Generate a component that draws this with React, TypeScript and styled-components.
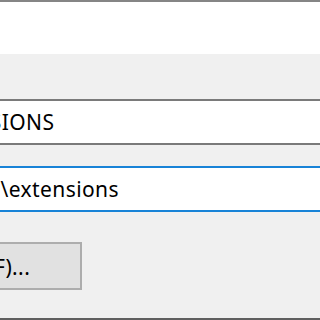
import styled, { createGlobalStyle } from "styled-components";

const GlobalStyle = createGlobalStyle`
    html, body {
        margin: 0;
        padding: 0;
        width: 320px;
        height: 320px;
        overflow: hidden;
        background: #f0f0f0;
    }
`;

const App = () => {
    return (
        <>
            <GlobalStyle />
            <Window>
                <TopRule />
                <TitleArea />
                <Body>
                    <Field>VSCODE_EXTENSIONS</Field>
                    <Field $focused>D:\Tools\VSCode\extensions</Field>
                    <ButtonRow>
                        <Button>浏览文件(F)...</Button>
                    </ButtonRow>
                </Body>
                <BottomRule />
            </Window>
        </>
    );
};

const Window = styled.div`
    display: flex;
    flex-direction: column;
    width: 320px;
    height: 320px;
    background: #f0f0f0;
    font-family: "Noto Sans", "Noto Sans CJK SC", sans-serif;
    font-size: 21px;
    letter-spacing: 0.4px;
    color: #000000;
`;

const TopRule = styled.div`
    height: 2px;
    background: #858585;
`;

const TitleArea = styled.div`
    height: 52px;
    background: #ffffff;
`;

/* the dialog continues past the left and right edges of the shot */
const Body = styled.div`
    flex: 1;
    display: flex;
    flex-direction: column;
    padding-top: 45px;
    margin-left: -179px;
    width: 700px;
`;

const Field = styled.div<{ $focused?: boolean }>`
    box-sizing: border-box;
    height: 46px;
    margin-bottom: 21px;
    padding: 0 9px;
    display: flex;
    align-items: center;
    background: #ffffff;
    border: 2px solid ${(p) => (p.$focused ? "#1883d7" : "#7a7a7a")};
    white-space: nowrap;
`;

const ButtonRow = styled.div`
    display: flex;
    padding-left: 29px;
    margin-top: 9px;
`;

const Button = styled.button`
    box-sizing: border-box;
    height: 48px;
    width: 232px;
    border: 2px solid #adadad;
    background: #e1e1e1;
    font-family: inherit;
    font-size: 21px;
    letter-spacing: 0.4px;
    color: #000000;
    padding: 0;
    white-space: nowrap;
`;

const BottomRule = styled.div`
    height: 2px;
    background: #5f5f5f;
`;

export default App;
